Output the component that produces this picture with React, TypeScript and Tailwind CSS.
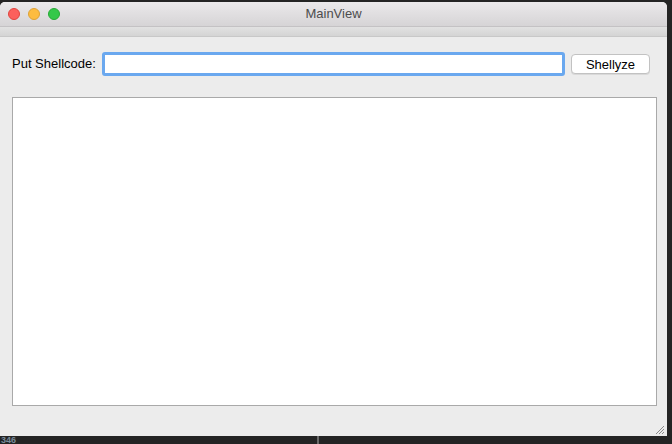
import React from "react"

const font = { fontFamily: '"Liberation Sans", Arial, sans-serif' }

function TrafficLights() {
  return (
    <div className="flex items-center gap-[8px] pl-[8px]">
      <span className="w-[12px] h-[12px] rounded-full bg-[#fc605c] border border-[#e0443e]" />
      <span className="w-[12px] h-[12px] rounded-full bg-[#fdbc40] border border-[#dea236]" />
      <span className="w-[12px] h-[12px] rounded-full bg-[#34c84a] border border-[#27aa35]" />
    </div>
  )
}

export default function App() {
  return (
    <div className="w-[672px] h-[444px] bg-[#242424] overflow-hidden flex flex-col pt-[2px]" style={font}>
      <div className="w-[667px] h-[434px] flex flex-col bg-[#ececec] rounded-t-[5px] overflow-hidden">
        {/* title bar */}
        <div className="relative h-[25px] flex items-center bg-gradient-to-b from-[#ebe9eb] to-[#d6d4d6] border-b border-[#c4c2c4]">
          <TrafficLights />
          <div className="absolute inset-0 flex items-center justify-center text-[13px] text-[#4d4d4d]">MainView</div>
        </div>
        {/* toolbar strip */}
        <div className="h-[10px] bg-gradient-to-b from-[#e2e2e2] to-[#d4d4d4] border-b border-[#c8c8c8]" />

        <div className="flex-1 flex flex-col pl-[12px] pr-[10px]">
          <div className="flex items-center mt-[15px] pr-[7px] h-[24px]">
            <span className="text-[13px] text-black w-[90px] shrink-0">Put Shellcode:</span>
            <div className="flex-1 h-[24px] rounded-[3px] border-[3px] border-[#6aa8ef] bg-white" />
            <button className="ml-[6px] w-[79px] h-[20px] rounded-[4px] bg-white border border-[#c2c2c2] text-[13px] text-black leading-none shadow-[0_1px_0_#d9d9d9]">
              Shellyze
            </button>
          </div>
          <div className="mt-[21px] h-[309px] bg-white border border-[#a9a9a9]" />
          <div className="flex-1 flex justify-end items-end pb-[1px]">
            <svg width="11" height="11" viewBox="0 0 11 11" className="-mr-[8px]">
              <path d="M10 2 L2 10 M10 5 L5 10 M10 8 L8 10" stroke="#8a8a8a" strokeWidth="1" />
            </svg>
          </div>
        </div>
      </div>
      <div className="h-[8px] flex items-start">
        <span className="pl-[1px] text-[9px] font-bold text-[#7a8a9a] leading-[8px] w-[317px]">346</span>
        <span className="w-[2px] h-[8px] bg-[#6a6a6a]" />
      </div>
    </div>
  )
}
